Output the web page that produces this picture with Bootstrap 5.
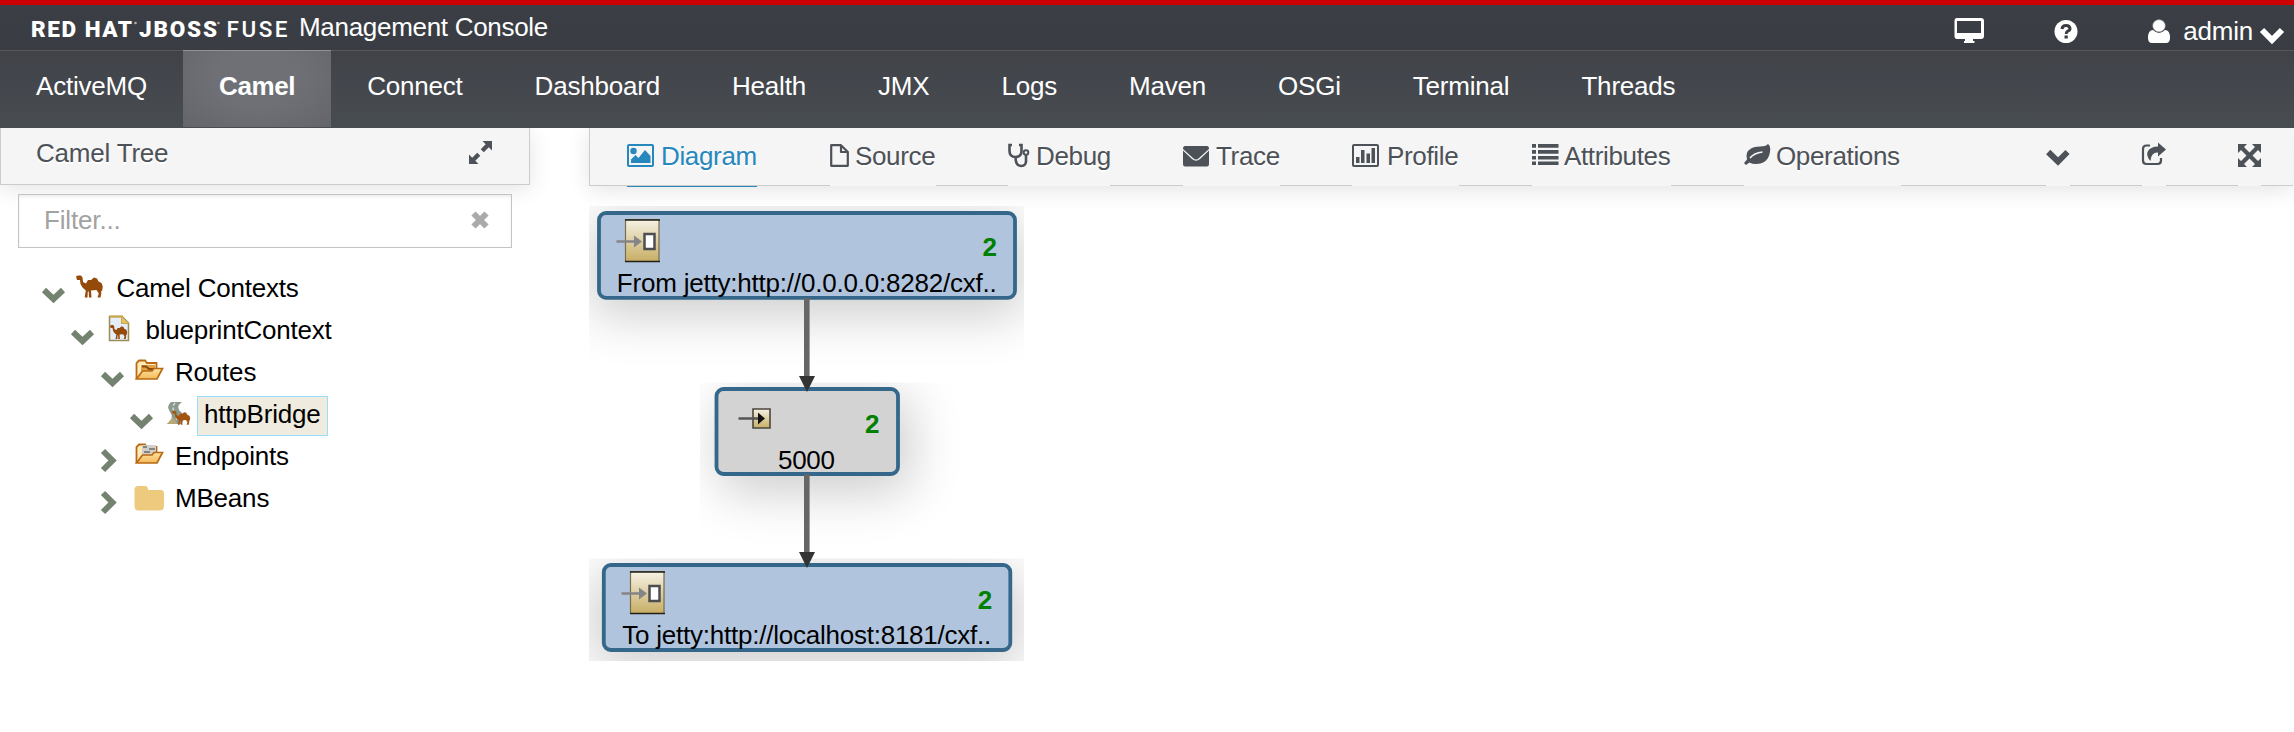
<!DOCTYPE html>
<html lang="en">
<head>
<meta charset="utf-8">
<title>Management Console</title>
<meta name="viewport" content="width=device-width, initial-scale=1">
<link href="https://cdn.jsdelivr.net/npm/bootstrap@5.3.0/dist/css/bootstrap.min.css" rel="stylesheet">
<style>
body{font-family:"Liberation Sans",Arial,sans-serif;font-size:26px;line-height:30px;letter-spacing:-.2px;color:#000;background:#fff;height:732px;overflow:hidden}
svg{display:block;flex:none;overflow:visible}
.masthead{border-top:5px solid #c00;height:50px;background:linear-gradient(#3b3e45,#393d43);color:#fff;line-height:45px;padding-left:32px;z-index:3}
.masthead a,.mainnav a{color:#fff}
.product{margin-left:5px;letter-spacing:-.3px}
.user-tools{padding-right:10px}
.user-tools a+a{margin-left:70px}
.mainnav{height:78px;border-top:1px solid #55585b;background:linear-gradient(#404248,#484d52);z-index:3}
.mainnav .nav-link{padding:0 36px;height:77px;line-height:72px;margin-top:-1px;width:max-content}
.mainnav .nav-link.active{font-weight:bold;background:radial-gradient(ellipse at 50% 35%,#6e7076 40%,#63656a 100%);border-top:1px solid #909296;line-height:70px;letter-spacing:-.4px}
.pane-head{background:#f5f5f5;border:1px solid #ccc;border-top:0;color:#4d5258;text-shadow:0 2px 0 #fff;box-shadow:0 4px 22px rgba(0,0,0,.11)}
.side{width:530px;margin-right:59px}
.side .pane-head{height:57px;line-height:50px;padding:0 36px 0 35px}
.filter-row{margin:9px 18px 0}
.filter-row .form-control{height:54px;border:1px solid #c4c4c4;border-radius:0;font-size:26px;line-height:51px;padding:0 25px 2px;letter-spacing:-.15px;box-shadow:inset 0 2px 3px rgba(0,0,0,.07)}
.filter-row .form-control::placeholder{color:#a2a2a2;opacity:1}
.clear-x{position:absolute;right:23px;top:17px}
.tree{margin-top:19px}
.tree li{height:42px;line-height:42px;padding-left:42px;letter-spacing:-.2px}
.tree .lv1{padding-left:71px}.tree .lv2{padding-left:100.5px}.tree .lv3{padding-left:129.5px}
.tree .chev{width:24px;height:42px;margin-right:8px;stroke:#73836f;stroke-width:6;fill:none}
.tree .pic{width:30px;height:42px;margin-right:12.500px}
.picked{background:#efebdf;border:1px solid #99defd;line-height:34px;height:40px;padding:0 6px;margin-left:-7px;margin-top:3px}
.main-pane{min-width:0}
.tabs{height:58px;line-height:56px;padding-left:37px;margin-right:1px;border-right:0;letter-spacing:-.35px}
.tabs .nav-link{padding:0;color:#4d5258;height:58px;margin-right:73px;border-bottom:1px solid #f5f5f5;border-radius:0;line-height:56px;white-space:nowrap}
.tabs .nav-link.active{color:#2688bd;border-bottom-color:#2688bd;height:59px}
.tabs .nav-link svg{fill:currentColor}
.w-diagram{width:130px}.w-source{width:106px}.w-debug{width:102px}.w-trace{width:97px}.w-profile{width:107px}.w-attr{width:139px}.w-oper{width:157px}
.tabs .w-debug,.tabs .w-profile{margin-left:-1px}
.tabs .first-tool{margin-left:72px}
.canvas{margin-top:20px}
.canvas text{letter-spacing:0}
</style>
</head>
<body class="d-flex flex-column">
<header class="masthead d-flex position-relative">
  <svg width="262" height="45" fill="#fff" font-family="Roboto,sans-serif" font-size="22.500" letter-spacing="0">
    <text x="-1" y="31.500" font-weight="900" textLength="101">RED HAT</text>
    <text x="107" y="31.500" font-weight="900" textLength="78">JBOSS</text>
    <text x="194.500" y="31.500" font-weight="500" textLength="61">FUSE</text>
    <circle cx="103.500" cy="18" r="1.300" opacity=".6"/><circle cx="186.500" cy="18" r="1.300" opacity=".6"/>
  </svg>
  <span class="product">Management Console</span>
  <div class="user-tools d-flex ms-auto">
    <a href="#" aria-label="Display"><svg width="30" height="45" viewBox="0 5 30 45"><path fill="#fff" fill-rule="evenodd" d="M3 18H27Q30 18 30 21V36Q30 39 27 39H19V41H20.500V43H10V41H11V39H3Q.5 39 .5 36V21Q.5 18 3 18ZM3 21V33H27V21Z"/></svg></a>
    <a href="#" aria-label="Help"><svg width="24" height="45" viewBox="0 5 24 45"><circle cx="12" cy="31.500" r="11.500" fill="#fff"/><path d="M8 29Q8.300 25.500 12 25.500T16 28.500Q16 30.300 13.800 31.200Q12.200 32 12.200 34" fill="none" stroke="#3a3d44" stroke-width="3"/><path d="M10.500 35.500h3.300v3h-3.300z" fill="#3a3d44"/></svg></a>
    <a href="#" class="d-flex text-decoration-none"><svg width="22" height="45" viewBox="0 5 22 45" fill="#fff"><path d="M5 30Q0 30 0 38Q0 43 4 43H18Q22 43 22 38Q22 30 17 30Q14 33 11 33T5 30Z"/><ellipse cx="11" cy="25.800" rx="6.200" ry="6" stroke="#b9babd" stroke-width=".6"/></svg><span class="pt-1" style="margin-left:13px">admin</span><svg width="24" height="45" viewBox="0 5 24 45" style="margin-left:7px"><path d="M2 30 12 40 22 30" fill="none" stroke="#fff" stroke-width="6"/></svg></a>
  </div>
</header>
<nav class="mainnav nav flex-nowrap position-relative">
  <a class="nav-link" href="#">ActiveMQ</a><a class="nav-link active" href="#">Camel</a><a class="nav-link" href="#">Connect</a><a class="nav-link" href="#">Dashboard</a><a class="nav-link" href="#">Health</a><a class="nav-link" href="#">JMX</a><a class="nav-link" href="#">Logs</a><a class="nav-link" href="#">Maven</a><a class="nav-link" href="#">OSGi</a><a class="nav-link" href="#">Terminal</a><a class="nav-link" href="#">Threads</a>
</nav>
<div class="d-flex flex-grow-1">
  <aside class="side flex-shrink-0">
    <div class="pane-head d-flex justify-content-between"><span>Camel Tree</span>
      <svg width="24" height="56" viewBox="0 0 24 56" fill="#4d5258"><path d="M13.500 13H23V22.500L19.800 19.300 14.800 24.300 11.700 21.200 16.700 16.200ZM9.500 36H0V26.500L3.200 29.700 8.200 24.700 11.300 27.800 6.300 32.800Z"/></svg>
    </div>
    <div class="filter-row position-relative">
      <input class="form-control" type="text" placeholder="Filter...">
      <svg class="clear-x" width="18" height="18"><path d="M2.500 2.500 15.500 15.500M15.500 2.500 2.500 15.500" stroke="#aaa" stroke-width="6"/></svg>
    </div>
    <svg width="0" height="0" class="position-absolute"><defs>
      <path id="camel" d="M0 1 2 0H5L6.500 2 7 6.500 10 8 12 4.500 15 4.500 18 2 21 3 22.500 6 25.500 7.500 26.800 11 26 16 25 15 25.300 18 24.500 22H21.500L22.800 18 20.500 14.500 15 15 15.500 22H13L12.700 16H11.800L11.500 22H8.700L9.800 15 6.500 12 4.500 8.500 4 4.500H1Z"/>
      <linearGradient id="fold" x2="0" y2="1"><stop stop-color="#ffe3a0"/><stop offset="1" stop-color="#f3b95a"/></linearGradient>
      <linearGradient id="brass" x2="0" y2="1"><stop stop-color="#f6f1e4"/><stop offset=".45" stop-color="#e0d3ab"/><stop offset="1" stop-color="#c7ae63"/></linearGradient>
      <path id="folder-front" d="M2.500 28 8.500 20H18L20 17.500H28.500L23 28Z" fill="url(#fold)" stroke="#b96a13" stroke-width="1.700"/>
    </defs></svg>
    <ul class="tree list-unstyled mb-0">
      <li class="d-flex"><svg class="chev"><path d="M2 23 11.500 32 21 23"/></svg><svg class="pic"><use href="#camel" x="2" y="8.500" fill="#954a0a"/></svg><span>Camel Contexts</span></li>
      <li class="d-flex lv1"><svg class="chev"><path d="M2 23 11.500 32 21 23"/></svg><svg class="pic"><path d="M6.500 7.500H19L25.500 14V31.500H6.500Z" fill="#e5edf8" stroke="#9c8d55" stroke-width="1.500"/><path d="M6.500 7.500H19V14H25.500" fill="none" stroke="#c9a544" stroke-width="2"/><path d="M19 8v6h6z" fill="#e8c25c"/><use href="#camel" transform="translate(7 16) scale(.64)" fill="#954a0a"/></svg><span>blueprintContext</span></li>
      <li class="d-flex lv2"><svg class="chev"><path d="M2 23 11.500 32 21 23"/></svg><svg class="pic"><path d="M3.500 28V12L6 9.500H12L14 12H23.500V18" fill="#ffeaba" stroke="#b96a13" stroke-width="1.800"/><path d="M8 14H22V20H8Z" fill="#dfa345"/><path d="M9 15.500h4l3 2.500h5" stroke="#8a4b0c" stroke-width="2" fill="none"/><use href="#folder-front" x="1"/></svg><span>Routes</span></li>
      <li class="d-flex lv3"><svg class="chev"><path d="M2 23 11.500 32 21 23"/></svg><svg class="pic"><path d="M9 9H20Q13 14 19 19T19 31H5Q13 25 8 19Q4 13 9 9Z" fill="#8b9a8c"/><path d="M13 10Q9 14 13 20T11 31" fill="none" stroke="#dfe3dc" stroke-width="1.300" stroke-dasharray="3 2"/><path d="M5 31 11 24 15 31Z" fill="#b8a878"/><use href="#camel" transform="translate(10 18) scale(.68 .62)" fill="#a5540f"/></svg><span class="picked">httpBridge</span></li>
      <li class="d-flex lv2"><svg class="chev"><path d="M2 16 11.500 25.500 2 35"/></svg><svg class="pic"><path d="M3.500 28V12L6 9.500H12L14 12H23.500V18" fill="#ffeaba" stroke="#b96a13" stroke-width="1.800"/><path d="M9 10H23V20H9Z" fill="#d0cfca"/><path d="M10 12h4M16 14h6M11 17h6" stroke="#858580" stroke-width="2"/><use href="#folder-front" x="1"/></svg><span>Endpoints</span></li>
      <li class="d-flex lv2"><svg class="chev"><path d="M2 16 11.500 25.500 2 35"/></svg><svg class="pic"><path transform="translate(1)" d="M4 9H11Q14 9 14 13H27Q30 13 30 17V29Q30 33.500 26 33.500H4Q.5 33.500 .5 29V13Q.5 9 4 9Z" fill="#edca7e"/></svg><span>MBeans</span></li>
    </ul>
  </aside>
  <main class="main-pane flex-grow-1">
    <nav class="pane-head tabs nav flex-nowrap">
      <a class="nav-link active w-diagram d-flex" href="#"><svg width="34" height="56" viewBox="0 0 34 56"><path fill-rule="evenodd" d="M2 16H25Q27 16 27 18V37Q27 39 25 39H2Q0 39 0 37V18Q0 16 2 16ZM2 18V37H25V18Z"/><circle cx="6.500" cy="23" r="3.200"/><path d="M4 35V31.500L8.500 27 11.500 30 18 22 23.500 28V35Z"/></svg>Diagram</a>
      <a class="nav-link w-source d-flex" href="#"><svg width="25" height="56" viewBox="0 0 25 56"><path d="M1.200 17.200H11L17.800 24V37.800H1.200ZM11 17.200V24H17.800" fill="none" stroke="currentColor" stroke-width="2.200" stroke-linejoin="round"/></svg>Source</a>
      <a class="nav-link w-debug d-flex" href="#"><svg width="28" height="56" viewBox="0 0 28 56"><path d="M4 17H1.500V23Q1.500 29 7.500 29T13.500 23V17H11M7.500 29Q7.500 38 13 38T18 32V27" fill="none" stroke="currentColor" stroke-width="2.600"/><circle cx="18" cy="24.500" r="2.300" fill="none" stroke="currentColor" stroke-width="2"/></svg>Debug</a>
      <a class="nav-link w-trace d-flex" href="#"><svg width="33" height="56" viewBox="0 0 33 56"><path d="M2 18H24Q26 18 26 21L16 30Q13 33 10 30L0 21Q0 18 2 18ZM0 22.500 9 31Q13 34.500 17 31L26 22.500V36Q26 38.500 24 38.500H2Q0 38.500 0 36Z"/></svg>Trace</a>
      <a class="nav-link w-profile d-flex" href="#"><svg width="35" height="56" viewBox="0 0 35 56"><path fill-rule="evenodd" d="M2 16H25Q27 16 27 18V37Q27 39 25 39H2Q0 39 0 37V18Q0 16 2 16ZM2 18V37H25V18Z"/><path d="M4 29h3.500v6H4zM9 22h3.500v13H9zM14.500 25.500H18V35h-3.500zM19.500 20H23v15h-3.500z"/></svg>Profile</a>
      <a class="nav-link w-attr d-flex" href="#"><svg width="32" height="56" viewBox="0 0 32 56"><path d="M0 16h4v3.800H0zM6 16h20.500v3.800H6zM0 22h4v3.800H0zM6 22h20.500v3.800H6zM0 28h4v3.500H0zM6 28h20.500v3.500H6zM0 33.500h4v3.500H0zM6 33.500h20.500v3.500H6z"/></svg>Attributes</a>
      <a class="nav-link w-oper d-flex" href="#"><svg width="32" height="56" viewBox="0 0 32 56"><path d="M24 16Q27 18 26 24Q24 36 12 36Q8 36 5.500 34.500L2 37 0 35 3 31.500Q1 24 7 20.500Q10 18.500 16 18.500T24 16Z"/><path d="M6 30Q10 25 18.500 24" fill="none" stroke="#f5f5f5" stroke-width="1.700"/></svg>Operations</a>
      <a class="nav-link first-tool" href="#" aria-label="More"><svg width="24" height="56" viewBox="0 0 24 56"><path d="M2.200 24 12 33.500 21.500 24" fill="none" stroke="currentColor" stroke-width="6"/></svg></a>
      <a class="nav-link" href="#" aria-label="Share" style="margin-left:-1px"><svg width="24" height="56" viewBox="0 0 24 56"><path d="M8 17.500H4.500Q1 17.500 1 21V32.500Q1 36 4.500 36H15.500Q19 36 19 32.500V30" fill="none" stroke="currentColor" stroke-width="2.200"/><path d="M16 14.500 24 21.500 16 28.500V24.500Q9 24 8.500 33Q4 28 5.500 24Q8 18.500 16 18.500Z"/></svg></a>
      <a class="nav-link me-0" href="#" aria-label="Full screen" style="margin-left:-1px"><svg width="23" height="56" viewBox="0 0 23 56"><path d="M0 16H9L6 19 11.500 24.500 17 19 14 16H23V25L20 22 14.500 27.500 20 33 23 30V39H14L17 36 11.500 30.500 6 36 9 39H0V30L3 33 8.500 27.500 3 22 0 25Z"/></svg></a>
    </nav>
    <svg class="canvas" width="1700" height="500" viewBox="589 206 1700 500" font-size="26" font-family="'Liberation Sans',Arial,sans-serif">
      <defs>
        <filter id="soft" filterUnits="userSpaceOnUse" x="480" y="110" width="700" height="640"><feGaussianBlur stdDeviation="26"/></filter>
        <clipPath id="c1"><path d="M589 206h435v176h-435z"/></clipPath><clipPath id="c2"><path d="M700 382.500h300v176h-300z"/></clipPath><clipPath id="c3"><path d="M589 558.500h435v102.500h-435z"/></clipPath>
        <g id="endpoint"><path d="M625.500 219.500h33.500v42h-33.500z" fill="url(#brass)" stroke="#776d4d" stroke-width="1.200"/><path d="M625 220h35M625 261.500h35" stroke="#211f18" stroke-width="1.600"/><path d="M644.500 234h10v15h-10z" fill="#fff" stroke="#4e4e50" stroke-width="2.500"/><path d="M616.500 241.500H636" stroke="#858587" stroke-width="2.500"/><path d="M634 235.500 642 241.500 634 247.500Z" fill="#858587"/></g>
      </defs>
      <g clip-path="url(#c1)"><rect x="591" y="219" width="432" height="96" rx="10" fill="#000" opacity=".2" filter="url(#soft)"/></g>
      <g clip-path="url(#c2)"><rect x="720" y="396" width="190" height="96" rx="10" fill="#000" opacity=".2" filter="url(#soft)"/></g>
      <g clip-path="url(#c3)"><rect x="593" y="571" width="428" height="96" rx="10" fill="#000" opacity=".2" filter="url(#soft)"/></g>
      <g stroke="#346789" stroke-width="3.800"><rect x="599" y="213" width="416" height="84.800" rx="7" fill="#b0c4de"/><rect x="716.500" y="389" width="181.500" height="85" rx="7" fill="#d3d3d3"/><rect x="603.800" y="565" width="406.500" height="85" rx="7" fill="#b0c4de"/></g>
      <use href="#endpoint"/><use href="#endpoint" x="5" y="352"/>
      <path d="M753 409h17v19h-17z" fill="url(#brass)" stroke="#4a473c" stroke-width="1.600"/><path d="M738.500 418.500H760" stroke="#555" stroke-width="2.500"/><path d="M758 412.500 765 418.500 758 424.500Z" fill="#111"/>
      <text x="616.800" y="291.800" textLength="380">From jetty:http://0.0.0.0:8282/cxf..</text>
      <text x="778" y="469" textLength="57">5000</text>
      <text x="622.300" y="644.300" textLength="369">To jetty:http://localhost:8181/cxf..</text>
      <g font-weight="bold" fill="#008000"><text x="982.500" y="255.500">2</text><text x="865" y="432.500">2</text><text x="977.800" y="608.500">2</text></g>
      <path d="M806.800 298V377M806.800 474V553" stroke="#666" stroke-width="5.600"/><path d="M799 376h16l-8 16zM799 552h16l-8 16z" fill="#333"/>
    </svg>
  </main>
</div>
<script src="https://cdn.jsdelivr.net/npm/bootstrap@5.3.0/dist/js/bootstrap.bundle.min.js"></script>
</body>
</html>
